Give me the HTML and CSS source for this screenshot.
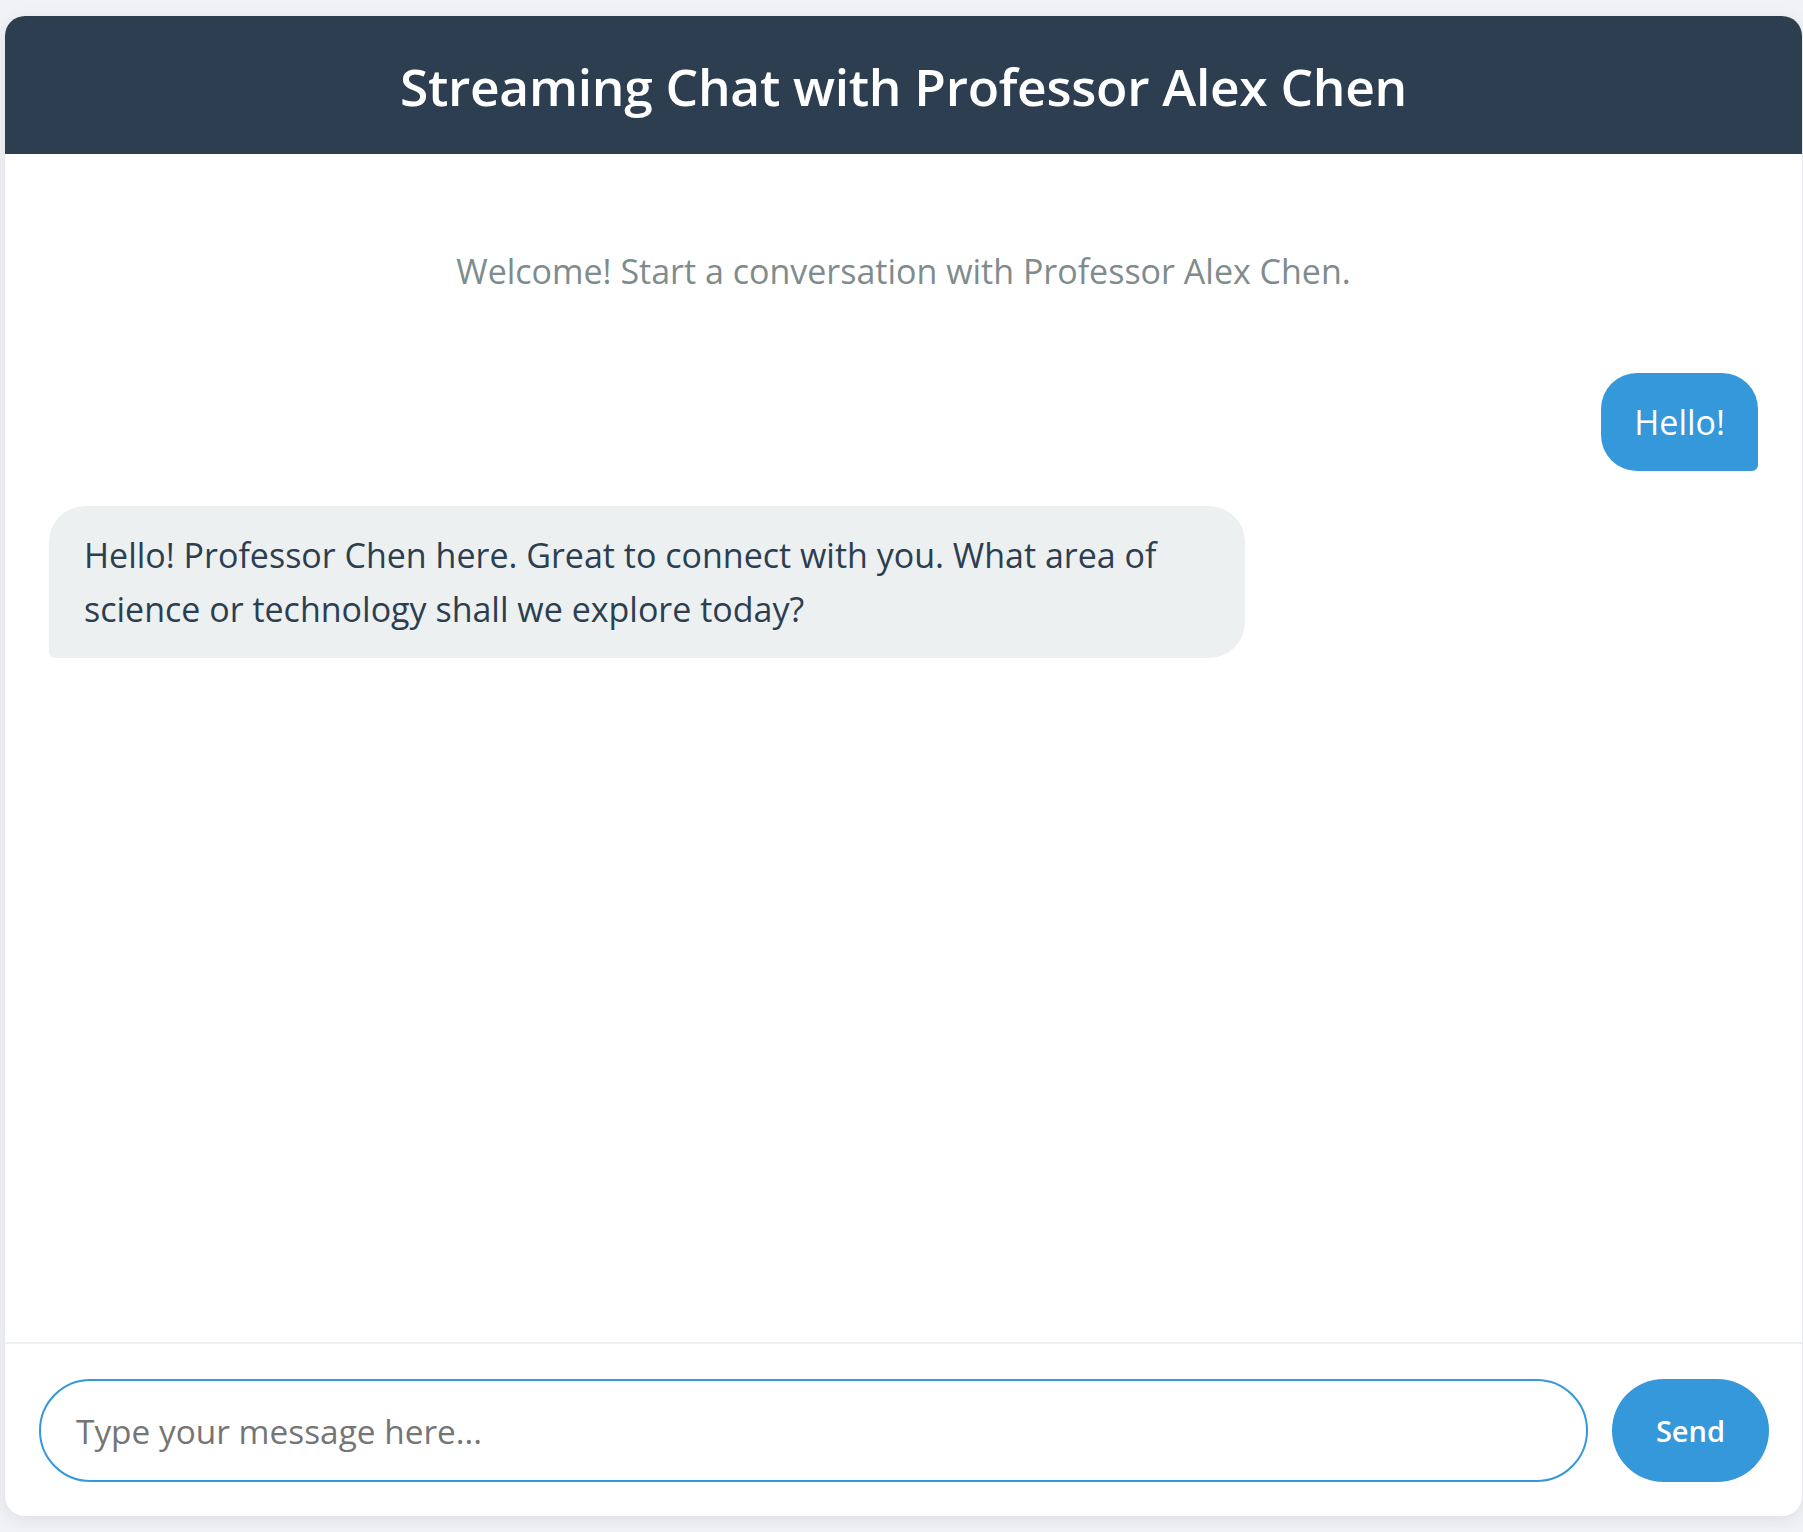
FILE: index.html
```html
<!DOCTYPE html>
<html lang="en">
<head>
<meta charset="utf-8">
<title>Streaming Chat with Professor Alex Chen</title>
<link rel="stylesheet" href="styles.css">
</head>
<body>
<div class="chat">
  <header class="chat-header">
    <h1 class="chat-title">Streaming Chat with Professor Alex Chen</h1>
  </header>
  <main class="messages">
    <p class="welcome">Welcome! Start a conversation with Professor Alex Chen.</p>
    <div class="msg msg-user">Hello!</div>
    <div class="msg msg-bot">Hello! Professor Chen here. Great to connect with you. What area of science or technology shall we explore today?</div>
  </main>
  <footer class="composer">
    <input class="composer-input" type="text" placeholder="Type your message here..." autofocus>
    <button class="composer-send" type="button">Send</button>
  </footer>
</div>
</body>
</html>
```

FILE: styles.css
```css
* { box-sizing: border-box; }

html, body {
  margin: 0;
  height: 100%;
}

body {
  background: #f0f2f5;
  font-family: "Open Sans", "Noto Sans", sans-serif;
  padding: 16px 1px 16px 5px;
  display: flex;
}

.chat {
  flex: 1;
  display: flex;
  flex-direction: column;
  background: #ffffff;
  border-radius: 20px;
  overflow: hidden;
  box-shadow: 0 4px 18px rgba(0, 0, 0, 0.08);
}

.chat-header {
  background: #2c3e50;
  height: 138px;
  display: flex;
  align-items: center;
  justify-content: center;
  padding-top: 2px;
}

.chat-title {
  margin: 0;
  color: #ffffff;
  font-size: 51.5px;
  font-weight: 600;
  letter-spacing: -0.3px;
}

.messages {
  flex: 1;
  display: flex;
  flex-direction: column;
  padding: 44px;
}

.welcome {
  margin: 50px 0 79px;
  text-align: center;
  color: #7f8c8d;
  font-size: 34px;
  line-height: 46px;
}

.msg {
  max-width: 70%;
  padding: 22px 35px;
  font-size: 34px;
  line-height: 54px;
  margin-bottom: 35px;
}

.msg-user {
  align-self: flex-end;
  background: #3498db;
  color: #ffffff;
  border-radius: 36px 36px 6px 36px;
  padding-left: 33px;
  padding-right: 33px;
}

.msg-bot {
  align-self: flex-start;
  background: #ecf0f1;
  color: #2c3e50;
  border-radius: 36px 36px 36px 6px;
}

.composer {
  border-top: 2px solid #ecf0f1;
  padding: 35px 33px 34px 34px;
  display: flex;
  gap: 24px;
}

.composer-input {
  flex: 1;
  height: 103px;
  border: 2px solid #3498db;
  border-radius: 52px;
  padding: 0 35px;
  font-family: inherit;
  font-size: 33.4px;
  color: #2c3e50;
  outline: none;
}

.composer-input::placeholder {
  color: #757575;
}

.composer-send {
  width: 157px;
  height: 103px;
  border: none;
  border-radius: 52px;
  background: #3498db;
  color: #ffffff;
  font-family: inherit;
  font-size: 29px;
  font-weight: 600;
}
```
